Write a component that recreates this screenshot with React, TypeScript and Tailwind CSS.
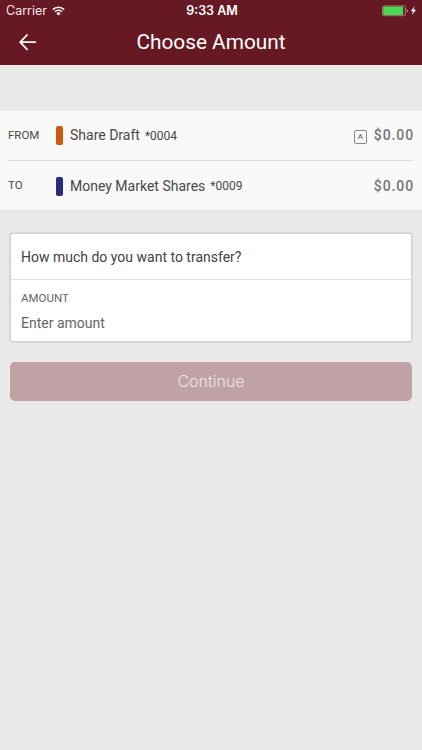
import clsx from 'clsx'

interface Account {
  label: string
  name: string
  mask: string
  balance: string
  colorClassName: string
  available?: boolean
}

const accounts: Account[] = [
  {
    label: 'FROM',
    name: 'Share Draft',
    mask: '*0004',
    balance: '$0.00',
    colorClassName: 'bg-[#cb5a10]',
    available: true,
  },
  {
    label: 'TO',
    name: 'Money Market Shares',
    mask: '*0009',
    balance: '$0.00',
    colorClassName: 'bg-[#282c7f]',
  },
]

function WifiIcon() {
  return (
    <svg className="h-[10px] w-[13px]" viewBox="0 0 13 10" fill="none" stroke="#fff" strokeWidth="1.5">
      <path d="M0.8 3.6a8.1 8.1 0 0 1 11.4 0" />
      <path d="M2.9 5.8a5.1 5.1 0 0 1 7.2 0" />
      <path d="M6.5 9.5 4.4 7.4a3 3 0 0 1 4.2 0Z" fill="#fff" stroke="none" />
    </svg>
  )
}

function BatteryIcon() {
  return (
    <svg className="h-[12px] w-[36px]" viewBox="0 0 36 12">
      <rect x="0.5" y="0.9" width="23" height="9.8" rx="1.7" fill="none" stroke="#b98c94" strokeWidth="0.8" />
      <rect x="1.2" y="1.6" width="20" height="8.4" rx="0.9" fill="#4cd651" />
      <path d="M24.8 4.2c1.3.4 1.3 2.8 0 3.2Z" fill="#e2c9cd" />
      <path d="M32.4 1.2 28.8 6.3h2.3l-1.1 3.6 4-5.1h-2.3Z" fill="#fff" />
    </svg>
  )
}

function StatusBar() {
  return (
    <div className="grid h-[22px] grid-cols-3 items-center pl-[6px] pr-[4px] font-['Inter',sans-serif] text-white">
      <div className="flex items-center gap-[5px]">
        <span className="text-[12.5px] leading-[22px] text-[#f5e6e8]">Carrier</span>
        <WifiIcon />
      </div>
      <span className="text-center text-[12.5px] font-semibold leading-[22px]">9:33 AM</span>
      <div className="flex justify-end">
        <BatteryIcon />
      </div>
    </div>
  )
}

function Header() {
  return (
    <header className="h-[65px] bg-[#661823]">
      <StatusBar />
      <div className="grid h-[41px] grid-cols-[48px_1fr_48px] items-center">
        <button type="button" aria-label="Back" className="pl-[19px]">
          <svg
            className="h-[17px] w-[18px]"
            viewBox="0 0 18 17"
            fill="none"
            stroke="#fff"
            strokeWidth="1.8"
            strokeLinecap="round"
            strokeLinejoin="round"
          >
            <path d="M8 1 1.2 8.2 8 15.4M1.5 8.2h14.8" />
          </svg>
        </button>
        <h1 className="text-center text-[20.8px] leading-[41px] text-white">Choose Amount</h1>
      </div>
    </header>
  )
}

function AccountRow({ account, divided }: { account: Account; divided: boolean }) {
  return (
    <div className={clsx('flex h-[50px] items-center', divided && 'border-b border-[#dedede]')}>
      <span className="w-[48px] text-[11.5px] text-[#484848]">{account.label}</span>
      <span className={clsx('h-[19px] w-[7px] rounded-[2px]', account.colorClassName)} />
      <span className="ml-[7px] text-[14px] text-[#484848]">{account.name}</span>
      <span className="ml-[5px] text-[12px] text-[#484848]">{account.mask}</span>
      <div className="ml-auto flex items-center gap-[7px] text-[#757575]">
        {account.available ? (
          <span className="mt-[3px] flex h-[14px] w-[13px] items-center justify-center rounded-[2px] border border-[#898989] text-[8px] font-medium leading-none">
            A
          </span>
        ) : null}
        <span className="-mr-[1px] text-[14px] font-medium tracking-[0.9px]">{account.balance}</span>
      </div>
    </div>
  )
}

export default function App() {
  return (
    <div className="h-[750px] w-[422px] overflow-hidden bg-[#e9e9e9] font-['Roboto',sans-serif]">
      <Header />

      <section className="mt-[46px] h-[100px] border-b border-[#dedede] bg-[#f9f9f9] pl-[8px] pr-[9px]">
        {accounts.map((account, index) => (
          <AccountRow key={account.label} account={account} divided={index < accounts.length - 1} />
        ))}
      </section>

      <main className="px-[10px] pt-[22px]">
        <section className="h-[109px] rounded-[2px] border border-[#d0d0d0] bg-white shadow-[0_0_2px_rgba(0,0,0,0.2)]">
          <h2 className="h-[46px] border-b border-[#dedede] pl-[10px] text-[14px] leading-[46px] text-[#424242]">
            How much do you want to transfer?
          </h2>
          <div className="flex flex-col pl-[10px] pt-[9px]">
            <label htmlFor="amount" className="text-[11.5px] leading-[18px] text-[#666]">
              AMOUNT
            </label>
            <input
              id="amount"
              type="text"
              placeholder="Enter amount"
              className="mt-[5px] h-[22px] text-[14px] leading-[22px] outline-none placeholder:text-[#666]"
            />
          </div>
        </section>

        <button
          type="button"
          disabled
          className="mt-[20px] block h-[39px] w-full rounded-[5px] bg-[#c0a2a6] font-['Inter',sans-serif] text-[16px] font-light leading-[39px] text-[#eee3e5]"
        >
          Continue
        </button>
      </main>
    </div>
  )
}
